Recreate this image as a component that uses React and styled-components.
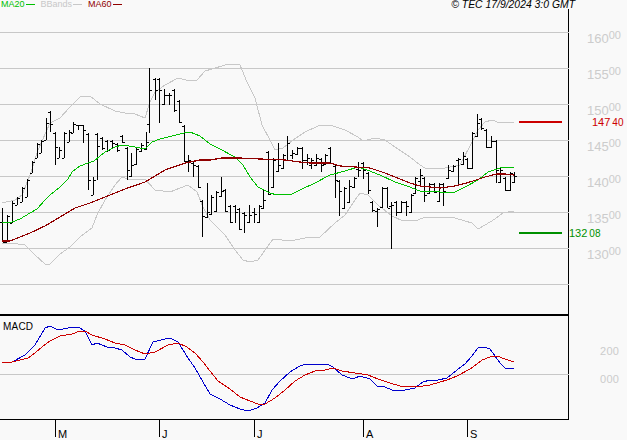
import React from 'react'
import styled, { createGlobalStyle } from 'styled-components'

const GlobalStyle = createGlobalStyle`
  html, body {
    margin: 0;
    background: #f9f9f9;
  }
`

const Page = styled.div`
  width: 627px;
  height: 440px;
  overflow: hidden;
  background: #f9f9f9;
  font-family: "Liberation Sans", Arial, sans-serif;
`

const Header = styled.div`
  height: 9px;
  padding: 0 52px 0 1px;
  display: flex;
  justify-content: space-between;
  line-height: 9px;
`

const Legend = styled.div`
  display: flex;
  gap: 6px;
`

const LegendItem = styled.div`
  display: flex;
  align-items: center;
  gap: 1px;
  font-size: 9px;
  color: ${p => p.$color};
  &::after {
    content: '';
    width: 9px;
    height: 1px;
    background: ${p => p.$color};
  }
`

const Copyright = styled.div`
  font-size: 10.4px;
  font-style: italic;
  color: #000;
`

const Body = styled.div`
  display: flex;
`

const ChartColumn = styled.div`
  width: 569px;
`

const Panels = styled.div`
  border-right: 1px solid #000;
  border-bottom: 1px solid #000;
`

const PricePanel = styled.div`
  height: 305px;
  border-bottom: 2px solid #000;
`

const MacdPanel = styled.div`
  position: relative;
  height: 103px;
`

const MacdTitle = styled.div`
  position: absolute;
  left: 3px;
  top: 5px;
  font-size: 10px;
  letter-spacing: 0.2px;
  color: #000;
`

const Plot = styled.svg`
  display: block;
  width: 569px;
  height: 100%;
`

const Months = styled.div`
  display: flex;
  padding-left: 55px;
`

const Month = styled.div`
  width: ${p => p.$width}px;
  height: 17px;
  box-sizing: border-box;
  border-left: 1px solid #000;
  padding: 8px 0 0 2px;
  font-size: 11px;
  line-height: 12px;
  color: #000;
`

const Scale = styled.div`
  position: relative;
  flex: 1;
`

const PriceTicks = styled.div`
  padding: 11px 0 0 18px;
`

const Tick = styled.div`
  height: 36px;
  display: flex;
  align-items: center;
  font-size: 13px;
  color: #ccc;
  sup {
    font-size: 11px;
    line-height: 1;
    margin: -5px 0 0 0;
    vertical-align: baseline;
  }
`

const MacdTicks = styled.div`
  margin-top: 65px;
  padding-left: 31px;
`

const MacdTick = styled.div`
  height: 28px;
  display: flex;
  align-items: center;
  font-size: 11px;
  letter-spacing: 0.3px;
  color: #ccc;
`

const Target = styled.div`
  position: absolute;
  left: ${p => p.$left}px;
  top: ${p => p.$top}px;
  font-size: 11px;
  line-height: 14px;
  color: ${p => p.$color};
  small {
    font-size: 10px;
    margin-left: 2px;
  }
`

// x, high, low, open, close
const bars = [
  [2,208,242,222,242],[7,215,242,242,216],[12,201,223,223,203],[17,197,205,205,198],[22,187,202,202,188],
  [27,179,197,197,180],[32,161,173,173,162],[37,143,158,158,144],[41,140,153,153,141],[46,118,140,140,123],
  [50,111,132,112,124],[55,132,165,133,147],[59,147,158,158,150],[64,132,158,158,133],[69,130,142,142,132],
  [73,122,133,133,124],[78,125,130,125,125],[83,125,143,125,130],[88,133,190,134,180],[93,177,195,195,180],
  [97,133,180,134,146],[102,137,150,138,148],[107,140,152,141,150],[112,140,148,141,143],[117,143,152,144,150],
  [122,135,143,136,142],[127,147,180,148,170],[131,153,177,176,165],[136,148,165,164,149],[141,143,152,151,145],
  [146,132,150,149,142],[149,68,133,124,90],[155,78,100,79,90],[159,78,123,79,90],[164,89,105,104,95],
  [169,93,105,95,95],[174,89,112,90,110],[179,100,123,101,122],[184,125,162,126,161],[188,155,172,161,160],
  [193,162,177,163,165],[198,165,188,166,187],[202,200,237,201,216],[207,183,218,217,212],[211,195,215,214,197],
  [216,191,212,211,192],[221,177,197,196,191],[225,189,212,190,211],[230,205,223,206,222],[235,205,223,206,212],
  [239,208,230,209,229],[244,212,233,213,215],[249,205,223,222,215],[254,208,223,212,214],[259,205,223,222,206],
  [263,190,209,208,200],[268,151,195,152,194],[273,158,188,187,160],[278,143,172,171,165],[283,154,169,168,155],
  [287,136,161,160,143],[292,150,159,155,153],[297,147,155,154,148],[302,147,169,148,160],[307,154,165,160,158],
  [311,158,169,165,160],[316,154,166,165,158],[321,158,172,159,165],[325,154,165,164,155],[330,147,164,148,163],
  [335,165,198,166,180],[339,180,216,181,191],[344,187,209,208,188],[349,180,203,202,186],[354,177,188,187,178],
  [358,162,177,169,170],[363,162,179,163,170],[368,172,194,173,190],[372,201,212,202,210],[377,208,227,211,209],
  [382,187,208,207,188],[387,187,208,188,208],[391,202,249,206,205],[396,201,216,202,212],[401,201,213,212,202],
  [406,201,216,202,206],[411,194,213,212,195],[415,177,194,193,178],[420,169,187,181,175],[424,177,202,178,195],
  [429,183,194,193,184],[434,183,193,184,192],[439,183,202,201,184],[443,183,206,184,191],[448,165,179,178,170],
  [453,165,172,171,166],[458,158,185,160,159],[463,152,165,164,156],[467,158,169,159,168],[472,132,169,168,133],
  [477,114,137,136,123],[481,118,130,119,128],[486,129,148,130,147],[491,136,148,147,141],[496,140,183,141,170],
  [500,168,183,182,170],[505,177,191,178,190],[510,172,191,190,173],[514,172,183,182,176],
]

const ma20 = [[2,223],[12,222],[20,219],[30,213],[37,209],[45,200],[50,195],[60,187],[68,179],[72,172],[80,166],[88,163],[94,161],[105,152],[115,147],[122,145],[135,147],[145,149],[152,142],[160,139],[172,136],[184,133],[190,132],[200,136],[210,144],[220,149],[235,157],[243,165],[250,177],[258,187],[270,193],[277,195],[292,194],[300,190],[315,183],[330,175],[345,171],[358,167],[367,170],[380,175],[395,182],[407,186],[420,191],[440,192],[455,192],[465,187],[478,180],[488,172],[500,168],[514,167]]

const ma60 = [[2,241],[10,241],[20,237],[30,233],[45,226],[60,217],[75,208],[90,203],[110,195],[125,189],[145,182],[165,170],[185,163],[200,160],[210,160],[222,158],[240,158],[260,159],[285,160],[300,162],[310,163],[330,163],[340,166],[355,167],[370,168],[385,173],[395,177],[410,183],[420,186],[440,188],[455,186],[470,182],[485,177],[497,174],[505,174],[514,175]]

const bandUp = [[2,203],[15,200],[22,195],[30,175],[38,150],[50,123],[60,118],[70,107],[80,97],[90,96],[100,104],[115,111],[125,113],[135,114],[145,118],[150,102],[155,92],[165,85],[178,78],[190,81],[197,80],[205,71],[212,69],[225,65],[232,64],[240,65],[247,82],[255,98],[262,125],[270,140],[275,150],[283,148],[293,140],[305,132],[318,126],[330,125],[345,130],[358,137],[363,141],[375,138],[385,140],[395,147],[410,157],[420,165],[425,168],[445,168],[460,165],[472,142],[478,130],[485,122],[492,120],[500,123],[514,122]]

const bandLow = [[2,244],[10,243],[25,245],[35,255],[45,264],[50,264],[60,254],[70,247],[80,237],[92,228],[97,215],[105,200],[115,185],[122,177],[130,180],[145,179],[155,190],[170,192],[180,188],[188,185],[197,192],[203,207],[210,220],[225,235],[235,250],[243,260],[250,262],[258,260],[273,239],[290,241],[305,238],[320,237],[335,223],[345,215],[355,200],[360,193],[368,195],[378,205],[392,216],[403,221],[418,220],[425,217],[445,217],[455,218],[465,221],[472,223],[478,229],[485,225],[495,219],[503,213],[514,211]]

const macd = [[2,362],[12,362],[25,355],[35,345],[45,328],[50,326],[58,330],[68,328],[78,327],[85,331],[92,345],[97,343],[107,347],[115,348],[122,350],[130,357],[135,359],[145,359],[153,342],[165,339],[170,338],[178,342],[188,358],[195,368],[203,382],[210,394],[220,399],[230,405],[240,409],[248,411],[257,408],[265,403],[272,390],[280,381],[290,372],[298,367],[305,364],[320,364],[327,364],[333,367],[342,375],[350,378],[355,378],[360,376],[370,379],[377,386],[385,387],[392,390],[405,390],[415,388],[423,382],[430,380],[438,380],[447,378],[457,370],[465,364],[472,356],[478,348],[484,347],[490,349],[495,356],[500,363],[505,368],[514,369]]

const signal = [[2,362],[12,362],[28,358],[35,353],[42,347],[50,341],[60,336],[72,334],[80,331],[85,331],[92,335],[105,339],[115,343],[125,345],[135,350],[145,354],[155,352],[168,345],[178,343],[187,347],[195,353],[203,362],[210,371],[218,381],[230,389],[240,397],[250,401],[258,404],[265,404],[275,398],[285,390],[295,381],[305,375],[315,371],[325,370],[333,368],[342,371],[355,373],[368,375],[378,379],[390,383],[400,386],[417,387],[430,385],[447,380],[457,376],[470,369],[477,364],[482,360],[490,357],[497,356],[505,359],[514,362]]

const grid = [32, 68, 104, 140, 176, 212, 248, 284]
const priceTicks = ['160', '155', '150', '145', '140', '135', '130']
const months = [['M', 104], ['J', 95], ['J', 109], ['A', 104], ['S', 102]]

const Curve = ({ points, color, width = 1 }) => (
  <polyline
    points={points.map(p => p.join(',')).join(' ')}
    fill='none'
    stroke={color}
    strokeWidth={width}
  />
)

const Bar = ({ data }) => {
  const [x, high, low, open, close] = data
  return (
    <g stroke='#000' strokeWidth='1'>
      <line x1={x + 0.5} y1={high} x2={x + 0.5} y2={low} />
      <line x1={x - 2} y1={open + 0.5} x2={x} y2={open + 0.5} />
      <line x1={x + 1} y1={close + 0.5} x2={x + 3} y2={close + 0.5} />
    </g>
  )
}

const App = () => (
  <Page>
    <GlobalStyle />
    <Header>
      <Legend>
        <LegendItem $color='#00c000'>MA20</LegendItem>
        <LegendItem $color='#c8c8c8'>BBands</LegendItem>
        <LegendItem $color='#900000'>MA60</LegendItem>
      </Legend>
      <Copyright>© TEC 17/9/2024 3:0 GMT</Copyright>
    </Header>
    <Body>
      <ChartColumn>
        <Panels>
          <PricePanel>
            <Plot viewBox='0 9 569 305' shapeRendering='crispEdges'>
              {grid.map(y => <line key={y} x1='0' y1={y + 0.5} x2='569' y2={y + 0.5} stroke='#c8c8c8' />)}
              <Curve points={bandUp} color='#c8c8c8' />
              <Curve points={bandLow} color='#c8c8c8' />
              {bars.map(b => <Bar key={b[0]} data={b} />)}
              <Curve points={ma20} color='#00c000' />
              <Curve points={ma60} color='#900000' width={1.2} />
              <line x1='519' y1='121.5' x2='562' y2='121.5' stroke='#cc0000' strokeWidth='2' />
              <line x1='519' y1='232.5' x2='562' y2='232.5' stroke='#009000' strokeWidth='2' />
            </Plot>
          </PricePanel>
          <MacdPanel>
            <MacdTitle>MACD</MacdTitle>
            <Plot viewBox='0 316 569 103' shapeRendering='crispEdges'>
              <line x1='0' y1='374.5' x2='569' y2='374.5' stroke='#c8c8c8' />
              <Curve points={macd} color='#0000cc' />
              <Curve points={signal} color='#cc0000' />
            </Plot>
          </MacdPanel>
        </Panels>
        <Months>
          {months.map(([label, width], i) => <Month key={i} $width={width}>{label}</Month>)}
        </Months>
      </ChartColumn>
      <Scale>
        <PriceTicks>
          {priceTicks.map(t => <Tick key={t}>{t}<sup>00</sup></Tick>)}
        </PriceTicks>
        <MacdTicks>
          <MacdTick>200</MacdTick>
          <MacdTick>000</MacdTick>
        </MacdTicks>
        <Target $left={23} $top={106} $color='#cc0000'>147<small>40</small></Target>
        <Target $left={0} $top={217} $color='#009000'>132<small>08</small></Target>
      </Scale>
    </Body>
  </Page>
)

export default App
